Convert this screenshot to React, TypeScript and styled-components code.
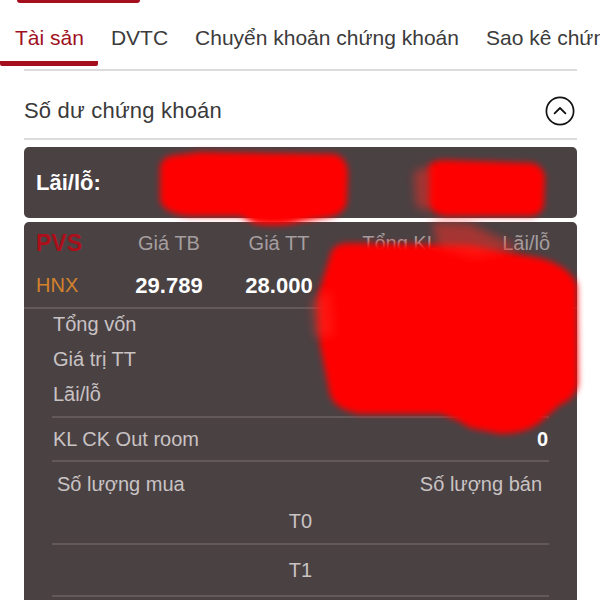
import React from "react";
import styled, { createGlobalStyle } from "styled-components";

const Global = createGlobalStyle`
  html, body { margin: 0; padding: 0; background: #ffffff; }
  body { font-family: "Liberation Sans", Arial, sans-serif; -webkit-font-smoothing: antialiased; }
  * { box-sizing: border-box; }
`;

const Page = styled.div`
  position: relative;
  width: 600px;
  height: 600px;
  overflow: hidden;
  background: #fff;
`;

const TopPill = styled.div`
  margin-left: 17px;
  width: 123px;
  height: 3px;
  border-radius: 0 0 8px 8px;
  background: #a50f1d;
`;

const Tabs = styled.div`
  display: flex;
  white-space: nowrap;
  overflow: hidden;
`;

const Tab = styled.div<{ $active?: boolean; $first?: boolean }>`
  flex: none;
  padding: 23px 14px 11px ${(p) => (p.$first ? "15px" : "13px")};
  font-size: 21px;
  line-height: 24px;
  color: ${(p) => (p.$active ? "#a0101e" : "#3b3b3b")};
  border-bottom: 5px solid ${(p) => (p.$active ? "#a50f1d" : "transparent")};
  border-radius: 0 0 2px 2px;
`;

const Divider = styled.div<{ $top: number }>`
  height: 2px;
  margin: ${(p) => p.$top}px 23px 0 24px;
  background: #dcdcdc;
`;

const SectionHeader = styled.div`
  display: flex;
  align-items: center;
  justify-content: space-between;
  height: 67px;
  padding: 12px 25px 0 24px;
`;

const SectionTitle = styled.div`
  font-size: 22px;
  letter-spacing: 0.2px;
  color: #3a3a3a;
`;

const CardStack = styled.div`
  display: flex;
  flex-direction: column;
  gap: 4px;
  margin: 7px 23px 0 24px;
`;

const Card = styled.div`
  background: #4a4143;
  border-radius: 5px;
`;

const SummaryCard = styled(Card)`
  height: 71px;
  display: flex;
  align-items: center;
  padding-left: 12px;
  font-size: 22px;
  font-weight: 700;
  color: #ffffff;
`;

const DetailCard = styled(Card)`
  height: 400px;
  border-radius: 5px 5px 0 0;
  display: flex;
  flex-direction: column;
`;

const Grid = styled.div`
  display: grid;
  grid-template-columns: 80px 106px 114px 128px 1fr;
  align-items: center;
  padding: 0 27px 0 12px;
`;

const GridRow = styled(Grid)<{ $h: number }>`
  height: ${(p) => p.$h}px;
`;

const Cell = styled.div<{ $align?: string; $color?: string; $weight?: number; $size?: number }>`
  text-align: ${(p) => p.$align || "center"};
  color: ${(p) => p.$color || "#a59e9f"};
  font-weight: ${(p) => p.$weight || 400};
  font-size: ${(p) => p.$size || 20}px;
  white-space: nowrap;
`;

const Rule = styled.div<{ $inset?: boolean }>`
  flex: none;
  height: 2px;
  background: #63595b;
  margin: ${(p) => (p.$inset ? "0 28px 0 28px" : "0")};
`;

const LabelList = styled.div`
  display: flex;
  flex-direction: column;
  gap: 7px;
  padding: 1px 29px 8px 29px;
`;

const Label = styled.div`
  height: 28px;
  display: flex;
  align-items: center;
  font-size: 20px;
  color: #c9c3c3;
`;

const InfoRow = styled.div<{ $h: number; $pad?: string }>`
  flex: none;
  height: ${(p) => p.$h}px;
  display: flex;
  align-items: center;
  justify-content: space-between;
  padding: ${(p) => p.$pad || "0 29px"};
  font-size: 20px;
  color: #c9c3c3;
`;

const Value = styled.span`
  color: #ffffff;
  font-weight: 700;
`;

const CenterRow = styled.div<{ $h: number; $pb?: number }>`
  flex: none;
  height: ${(p) => p.$h}px;
  padding-bottom: ${(p) => p.$pb || 0}px;
  display: flex;
  align-items: center;
  justify-content: center;
  font-size: 20px;
  color: #c9c3c3;
`;

const Redaction = styled.svg`
  position: absolute;
  left: 0;
  top: 0;
  pointer-events: none;
`;

const ChevronCircle = () => (
  <svg width="30" height="30" viewBox="0 0 30 30">
    <circle cx="15" cy="15" r="13.6" fill="none" stroke="#111" strokeWidth="1.7" />
    <path d="M9.6 17.4 L15 12 L20.4 17.4" fill="none" stroke="#111" strokeWidth="1.8" strokeLinecap="round" strokeLinejoin="round" />
  </svg>
);

export default function App() {
  return (
    <Page>
      <Global />
      <TopPill />
      <Tabs>
        <Tab $active $first>Tài sản</Tab>
        <Tab>DVTC</Tab>
        <Tab>Chuyển khoản chứng khoán</Tab>
        <Tab>Sao kê chứng khoán</Tab>
      </Tabs>
      <Divider $top={3} />
      <SectionHeader>
        <SectionTitle>Số dư chứng khoán</SectionTitle>
        <ChevronCircle />
      </SectionHeader>
      <Divider $top={0} />
      <CardStack>
        <SummaryCard>Lãi/lỗ:</SummaryCard>
        <DetailCard>
          <GridRow $h={42}>
            <Cell $align="left" $color="#ad0f1a" $weight={700} $size={23}>PVS</Cell>
            <Cell>Giá TB</Cell>
            <Cell>Giá TT</Cell>
            <Cell>Tổng KL</Cell>
            <Cell $align="right">Lãi/lỗ</Cell>
          </GridRow>
          <GridRow $h={43}>
            <Cell $align="left" $color="#d4822c">HNX</Cell>
            <Cell $color="#ffffff" $weight={700} $size={22}>29.789</Cell>
            <Cell $color="#ffffff" $weight={700} $size={22}>28.000</Cell>
            <Cell />
            <Cell />
          </GridRow>
          <Rule />
          <LabelList>
            <Label>Tổng vốn</Label>
            <Label>Giá trị TT</Label>
            <Label>Lãi/lỗ</Label>
          </LabelList>
          <Rule $inset />
          <InfoRow $h={42}>
            <span>KL CK Out room</span>
            <Value>0</Value>
          </InfoRow>
          <Rule $inset />
          <InfoRow $h={44} $pad="0 35px 0 33px">
            <span>Số lượng mua</span>
            <span>Số lượng bán</span>
          </InfoRow>
          <CenterRow $h={37} $pb={7}>T0</CenterRow>
          <Rule $inset />
          <CenterRow $h={50}>T1</CenterRow>
          <Rule $inset />
        </DetailCard>
      </CardStack>
      <Redaction width="600" height="600" viewBox="0 0 600 600">
        <defs>
          <filter id="soft" x="-20%" y="-20%" width="140%" height="140%">
            <feGaussianBlur stdDeviation="3" />
          </filter>
          <filter id="softer" x="-20%" y="-20%" width="140%" height="140%">
            <feGaussianBlur stdDeviation="5" />
          </filter>
        </defs>
        <g filter="url(#soft)" fill="#ff0000">
          <path d="M160 168 Q161 156 176 155 L200 152 L334 154 Q348 157 348 175 L347 202 Q345 216 322 218 L300 222 Q280 228 255 224 L240 216 L190 216 Q163 214 160 200 Z" />
          <path d="M428 168 Q430 160 445 160 L532 163 Q545 166 545 180 L544 206 Q541 216 528 216 L446 216 Q430 214 428 202 Z" />
          <path d="M330 256 Q332 243 350 243 L470 245 L540 258 Q570 266 577 285 L578 385 Q574 400 560 405 L545 418 Q530 434 500 434 L470 428 Q455 418 440 414 L360 414 Q335 410 330 395 L320 345 L318 295 Z" />
        </g>
        <g filter="url(#softer)" fill="#ff2a20" opacity="0.5">
          <path d="M414 172 L430 166 L430 212 L416 206 Z" />
          <path d="M432 222 L470 224 L520 248 L475 258 L438 248 Z" />
          <path d="M312 300 L330 290 L334 335 L315 338 Z" />
        </g>
      </Redaction>
    </Page>
  );
}
